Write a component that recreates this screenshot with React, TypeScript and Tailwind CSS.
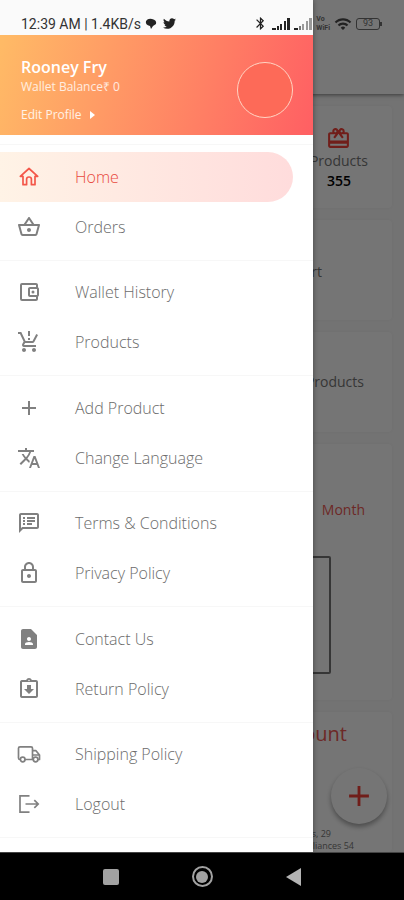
import type { ComponentType, ReactNode } from "react";
import {
  MdAdd,
  MdBluetooth,
  MdContactPage,
  MdOutlineAccountBalanceWallet,
  MdOutlineAssignmentReturned,
  MdOutlineLock,
  MdOutlineProductionQuantityLimits,
  MdOutlineRedeem,
  MdOutlineShoppingBasket,
  MdOutlineSpeakerNotes,
  MdTranslate,
  MdWifi,
} from "react-icons/md";
import { FaTwitter } from "react-icons/fa";

type IconProps = { size?: number; className?: string };
type MenuItem = { label: string; icon: ComponentType<IconProps>; active?: boolean };

function HouseIcon({ size = 24, className }: IconProps) {
  return (
    <svg
      width={size}
      height={size}
      viewBox="0 0 24 24"
      className={className}
      fill="none"
      stroke="currentColor"
      strokeWidth="1.7"
      strokeLinejoin="round"
      aria-hidden="true"
    >
      <path d="M12 3.5 3.3 11.3H6V19.7H9.6V14.2Q9.6 12 12 12Q14.4 12 14.4 14.2V19.7H18V11.3H20.7Z" />
    </svg>
  );
}

function TruckIcon({ size = 24, className }: IconProps) {
  return (
    <svg
      width={size}
      height={size}
      viewBox="0 0 24 24"
      className={className}
      fill="none"
      stroke="currentColor"
      strokeWidth="1.7"
      strokeLinejoin="round"
      aria-hidden="true"
    >
      <path d="M3.3 17.5H3Q1.5 17.5 1.5 16V6.3Q1.5 4.8 3 4.8H14Q15.5 4.8 15.5 6.3V17.5H8M15.5 8.7H19L22.5 13V17.5H21M15.5 13H22.5" />
      <circle cx="5.7" cy="17.5" r="2.3" />
      <circle cx="18.6" cy="17.5" r="2.3" />
    </svg>
  );
}

function LogoutIcon({ size = 24, className }: IconProps) {
  return (
    <svg
      width={size}
      height={size}
      viewBox="0 0 24 24"
      className={className}
      fill="none"
      stroke="currentColor"
      strokeWidth="1.7"
      aria-hidden="true"
    >
      <path d="M12.5 3.8H3V20.2H12.5M8.5 12H21M17.3 8.2 21.2 12 17.3 15.8" />
    </svg>
  );
}

const groups: MenuItem[][] = [
  [
    { label: "Home", icon: HouseIcon, active: true },
    { label: "Orders", icon: MdOutlineShoppingBasket },
  ],
  [
    { label: "Wallet History", icon: MdOutlineAccountBalanceWallet },
    { label: "Products", icon: MdOutlineProductionQuantityLimits },
  ],
  [
    { label: "Add Product", icon: MdAdd },
    { label: "Change Language", icon: MdTranslate },
  ],
  [
    { label: "Terms & Conditions", icon: MdOutlineSpeakerNotes },
    { label: "Privacy Policy", icon: MdOutlineLock },
  ],
  [
    { label: "Contact Us", icon: MdContactPage },
    { label: "Return Policy", icon: MdOutlineAssignmentReturned },
  ],
  [
    { label: "Shipping Policy", icon: TruckIcon },
    { label: "Logout", icon: LogoutIcon },
  ],
];

function Signal({ weak = false }: { weak?: boolean }) {
  const fill = weak ? "#9a9a9a" : "#222";
  return (
    <svg width="18" height="12" viewBox="0 0 18 12" aria-hidden="true">
      <rect x="0" y="10" width="4" height="2" fill="#222" />
      <rect x="5" y="8" width="2" height="4" fill={weak ? "#777" : "#222"} />
      <rect x="8" y="6" width="2" height="6" fill={fill} />
      <rect x="12" y="3" width="2" height="9" fill={fill} />
      <rect x="15" y="0" width="3" height="12" fill={fill} />
    </svg>
  );
}

function StatusBar() {
  return (
    <div className="z-20 flex h-[35px] items-center self-start pt-3 pr-[22px] pl-[21px] font-[Roboto,sans-serif] text-sm leading-4 text-[#333] [grid-area:1/1]">
      <span>12:39 AM | 1.4KB/s</span>
      <svg className="ml-1" width="12" height="12" viewBox="0 0 12 12" aria-hidden="true">
        <path d="M1 3Q3 0 7 1Q12 2 11 6L8 8L6 11L5 8Q0 7 1 3Z" fill="#222" />
      </svg>
      <FaTwitter className="ml-1.5 text-[#222]" size={13} />
      <div className="ml-auto flex items-center gap-1">
        <MdBluetooth size={15} className="text-[#222]" />
        <Signal />
        <Signal weak />
        <span className="flex flex-col text-[7px] leading-[9px] font-bold">
          <span>Vo</span>
          <span>WiFi</span>
        </span>
        <MdWifi size={18} className="text-[#222]" />
        <div className="flex items-center">
          <span className="flex h-3 w-6 items-center justify-center rounded-[3px] border border-[#333] text-[9px] leading-none">
            93
          </span>
          <span className="h-1 w-0.5 bg-[#333]" />
        </div>
      </div>
    </div>
  );
}

function Card({ className, children }: { className: string; children: ReactNode }) {
  return (
    <section className={`flex flex-col rounded-sm bg-white pr-6 shadow-[0_0_3px_rgba(0,0,0,0.04)] ${className}`}>
      {children}
    </section>
  );
}

function Dashboard() {
  return (
    <div className="flex min-w-0 flex-col bg-[#fafafa] [grid-area:1/1]">
      <header className="h-[94px] bg-white shadow-[0_1px_4px_rgba(0,0,0,0.5)]" />
      <main className="flex flex-1 flex-col gap-3 pt-3 pr-3 pl-3">
        <Card className="h-[102px] items-end pt-5">
          <div className="flex flex-col items-center">
            <MdOutlineRedeem size={25} className="text-[#f4433a]" />
            <span className="text-sm leading-5 text-[#777]">Products</span>
            <strong className="text-sm leading-5 font-semibold text-black">355</strong>
          </div>
        </Card>
        <Card className="h-[100px] justify-center pt-1 pr-[70px] text-right text-sm text-[#777]">Report</Card>
        <Card className="h-[100px] justify-center pr-7 text-right text-sm text-[#777]">Sold Out Products</Card>
        <Card className="h-[256px] items-end pt-14">
          <span className="pr-[3px] text-sm leading-5 text-[#ee5a55]">Month</span>
          <div className="mt-9 mr-[37px] h-[118px] w-60 rounded-xs border-2 border-[#777]" />
        </Card>
        <Card className="flex-1 justify-between text-right">
          <h2 className="pt-2 pr-[21px] text-xl leading-7 text-[#ee5a55]">Category Count</h2>
          <p className="text-[9px] leading-3 text-[#777]">
            <span className="block pr-[37px]">Phones, 29</span>
            <span className="block pr-3.5">Appliances 54</span>
          </p>
        </Card>
      </main>
    </div>
  );
}

function Drawer() {
  return (
    <aside className="z-10 flex w-[313px] flex-col bg-white shadow-[0_0_6px_rgba(0,0,0,0.4)] [grid-area:1/1]">
      <div className="h-[35px] bg-[#fafafa]" />
      <div className="flex h-[100px] items-center justify-between bg-[linear-gradient(105deg,#ffbb66,#ff5f63)] pr-5 pl-[21px]">
        <div className="flex flex-col items-start pt-2 text-white">
          <span className="text-base leading-6 font-semibold">Rooney Fry</span>
          <span className="text-xs leading-4 text-white/80">Wallet Balance₹ 0</span>
          <button type="button" className="mt-3 flex items-center gap-2 text-xs leading-4 text-white/85">
            Edit Profile
            <span className="border-y-4 border-l-[5px] border-y-transparent border-l-white" />
          </button>
        </div>
        <div className="mt-2.5 size-14 rounded-full border border-[#ffd5c4] bg-[#fd6a58]" />
      </div>
      <nav className="flex flex-1 flex-col pt-[9px] pb-[14px]">
        {groups.map((group) => (
          <ul key={group[0].label} className="flex flex-1 flex-col border-t border-[#f7f7f7] pt-[7px] pb-2 last:border-b">
            {group.map(({ label, icon: Icon, active }) => (
              <li key={label} className="flex flex-1 pr-5">
                <a
                  href="#"
                  className={`flex flex-1 items-center gap-[34px] rounded-r-full pl-[17px] text-base leading-5 font-light ${
                    active ? "bg-linear-to-r from-[#fff3e6] to-[#ffdcdc] text-[#e8483c]" : "text-[#6c6c6c]"
                  }`}
                >
                  <Icon size={24} className={active ? "text-[#f4574a]" : "text-[#808080]"} />
                  {label}
                </a>
              </li>
            ))}
          </ul>
        ))}
      </nav>
    </aside>
  );
}

export default function App() {
  return (
    <div className="flex min-h-screen flex-col bg-black font-['Open_Sans',sans-serif]">
      <div className="relative grid flex-1 overflow-hidden">
        <Dashboard />
        <button
          type="button"
          aria-label="Add"
          className="absolute right-[17px] bottom-7 flex size-14 items-center justify-center rounded-full bg-white text-[#f4433a] shadow-[0_3px_5px_rgba(0,0,0,0.35)]"
        >
          <MdAdd size={34} />
        </button>
        <div className="absolute inset-0 bg-black/54" />
        <StatusBar />
        <Drawer />
      </div>
      <footer className="flex h-12 items-center justify-center gap-[70px] border-t border-[#444]">
        <button type="button" aria-label="Recent apps" className="flex w-[22px] justify-center">
          <span className="size-4 rounded-xs bg-[#a2a2a2]" />
        </button>
        <button
          type="button"
          aria-label="Home screen"
          className="flex size-[21px] items-center justify-center rounded-full border-2 border-[#a2a2a2]"
        >
          <span className="size-3 rounded-full bg-[#a2a2a2]" />
        </button>
        <button type="button" aria-label="Back" className="flex w-[22px] justify-center">
          <span className="border-y-[9px] border-r-[15px] border-y-transparent border-r-[#b4b4b4]" />
        </button>
      </footer>
    </div>
  );
}
